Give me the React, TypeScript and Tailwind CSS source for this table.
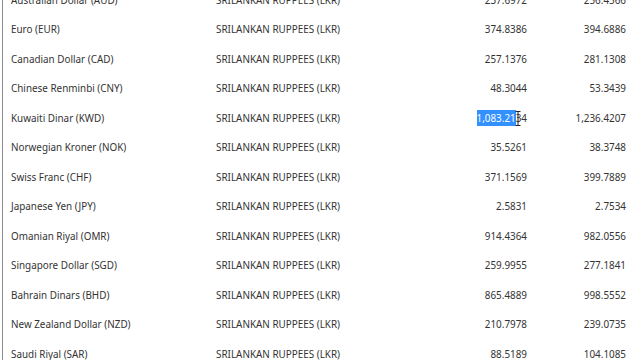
const rates = [
  { name: 'Australian Dollar (AUD)', buy: '237.6972', sell: '256.4566' },
  { name: 'Euro (EUR)', buy: '374.8386', sell: '394.6886' },
  { name: 'Canadian Dollar (CAD)', buy: '257.1376', sell: '281.1308' },
  { name: 'Chinese Renminbi (CNY)', buy: '48.3044', sell: '53.3439' },
  { name: 'Kuwaiti Dinar (KWD)', buy: '1,083.2134', sell: '1,236.4207' },
  { name: 'Norwegian Kroner (NOK)', buy: '35.5261', sell: '38.3748' },
  { name: 'Swiss Franc (CHF)', buy: '371.1569', sell: '399.7889' },
  { name: 'Japanese Yen (JPY)', buy: '2.5831', sell: '2.7534' },
  { name: 'Omanian Riyal (OMR)', buy: '914.4364', sell: '982.0556' },
  { name: 'Singapore Dollar (SGD)', buy: '259.9955', sell: '277.1841' },
  { name: 'Bahrain Dinars (BHD)', buy: '865.4889', sell: '998.5552' },
  { name: 'New Zealand Dollar (NZD)', buy: '210.7978', sell: '239.0735' },
  { name: 'Saudi Riyal (SAR)', buy: '88.5189', sell: '104.1085' },
]

export default function App() {
  return (
    <div className="w-[640px] h-[360px] overflow-hidden bg-white">
      <div
        className="-mt-[15px] ml-[2px] border-l border-[#8c8c8c] pl-[8px] pr-[14px] text-[9.9px] text-[#333333]"
        style={{ fontFamily: '"Noto Sans", "Open Sans", sans-serif' }}
      >
        {rates.map((r, idx) => (
          <div key={idx} className="grid grid-cols-[205px_1fr_100px_99px] h-[29.5px] items-center leading-[16px]">
            <span>{r.name}</span>
            <span>SRILANKAN RUPPEES (LKR)</span>
            <span className="text-right">
              {idx === 4 ? (
                <span className="relative">
                  <span className="inline-block h-[16px] bg-[#3390ff] align-middle text-white">1,083.21</span>
                  <span className="align-middle">34</span>
                  <svg className="absolute left-[38px] top-[1px]" width="6" height="15" viewBox="0 0 6 15">
                    <path d="M0.5 0.5h5M3 0.5v14M0.5 14.5h5" stroke="#222" strokeWidth="1" fill="none" />
                  </svg>
                </span>
              ) : (
                r.buy
              )}
            </span>
            <span className="text-right">{r.sell}</span>
          </div>
        ))}
      </div>
    </div>
  )
}
